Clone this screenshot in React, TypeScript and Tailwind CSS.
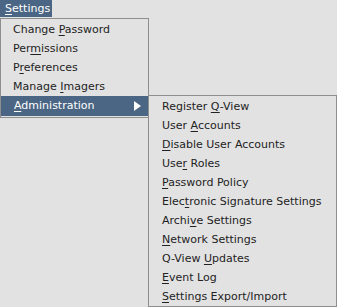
import React from 'react';

type Item = { pre: string; key: string; post: string };

const MAIN: Item[] = [
  { pre: 'Change ', key: 'P', post: 'assword' },
  { pre: 'Per', key: 'm', post: 'issions' },
  { pre: 'P', key: 'r', post: 'eferences' },
  { pre: 'Manage ', key: 'I', post: 'magers' },
];

const ADMIN: Item[] = [
  { pre: 'Register ', key: 'Q', post: '-View' },
  { pre: 'User ', key: 'A', post: 'ccounts' },
  { pre: '', key: 'D', post: 'isable User Accounts' },
  { pre: 'Use', key: 'r', post: ' Roles' },
  { pre: '', key: 'P', post: 'assword Policy' },
  { pre: 'Elec', key: 't', post: 'ronic Signature Settings' },
  { pre: 'Archi', key: 'v', post: 'e Settings' },
  { pre: '', key: 'N', post: 'etwork Settings' },
  { pre: 'Q-View ', key: 'U', post: 'pdates' },
  { pre: '', key: 'E', post: 'vent Log' },
  { pre: '', key: 'S', post: 'ettings Export/Import' },
];

function Label({ item }: { item: Item }) {
  return (
    <span className="whitespace-nowrap">
      {item.pre}
      <span className="underline underline-offset-2">{item.key}</span>
      {item.post}
    </span>
  );
}

export default function App() {
  return (
    <div
      className="w-[337px] h-[307px] bg-[#e2e2e2] text-[11px] text-[#222222] overflow-hidden"
      style={{ fontFamily: '"DejaVu Sans", Verdana, sans-serif' }}
    >
      {/* menu bar */}
      <div className="h-[18px] flex">
        <div className="h-[17px] w-[52px] bg-[#4b6684] text-white pl-[5px] leading-[17px]">
          <span className="underline underline-offset-2">S</span>ettings
        </div>
      </div>

      <div className="flex items-start">
        {/* settings dropdown */}
        <div className="w-[149px] border border-[#8e8e8e] bg-[#e2e2e2] py-px">
          {MAIN.map((m) => (
            <div key={m.key + m.post} className="h-[19px] leading-[19px] pl-[12px]">
              <Label item={m} />
            </div>
          ))}
          <div className="h-[20px] leading-[20px] pl-[13px] pr-[6px] bg-[#4b6684] text-white flex items-center justify-between">
            <Label item={{ pre: '', key: 'A', post: 'dministration' }} />
            <svg width="7" height="10" viewBox="0 0 7 10" className="mr-[1px]">
              <path d="M0 0 L7 5 L0 10 Z" fill="#ffffff" />
            </svg>
          </div>
        </div>

        {/* administration submenu */}
        <div className="mt-[77px] -ml-px w-[189px] border border-[#8e8e8e] bg-[#e2e2e2] pt-px">
          {ADMIN.map((a) => (
            <div key={a.pre + a.key + a.post} className="h-[19px] leading-[19px] pl-[13px]">
              <Label item={a} />
            </div>
          ))}
        </div>
      </div>
    </div>
  );
}
